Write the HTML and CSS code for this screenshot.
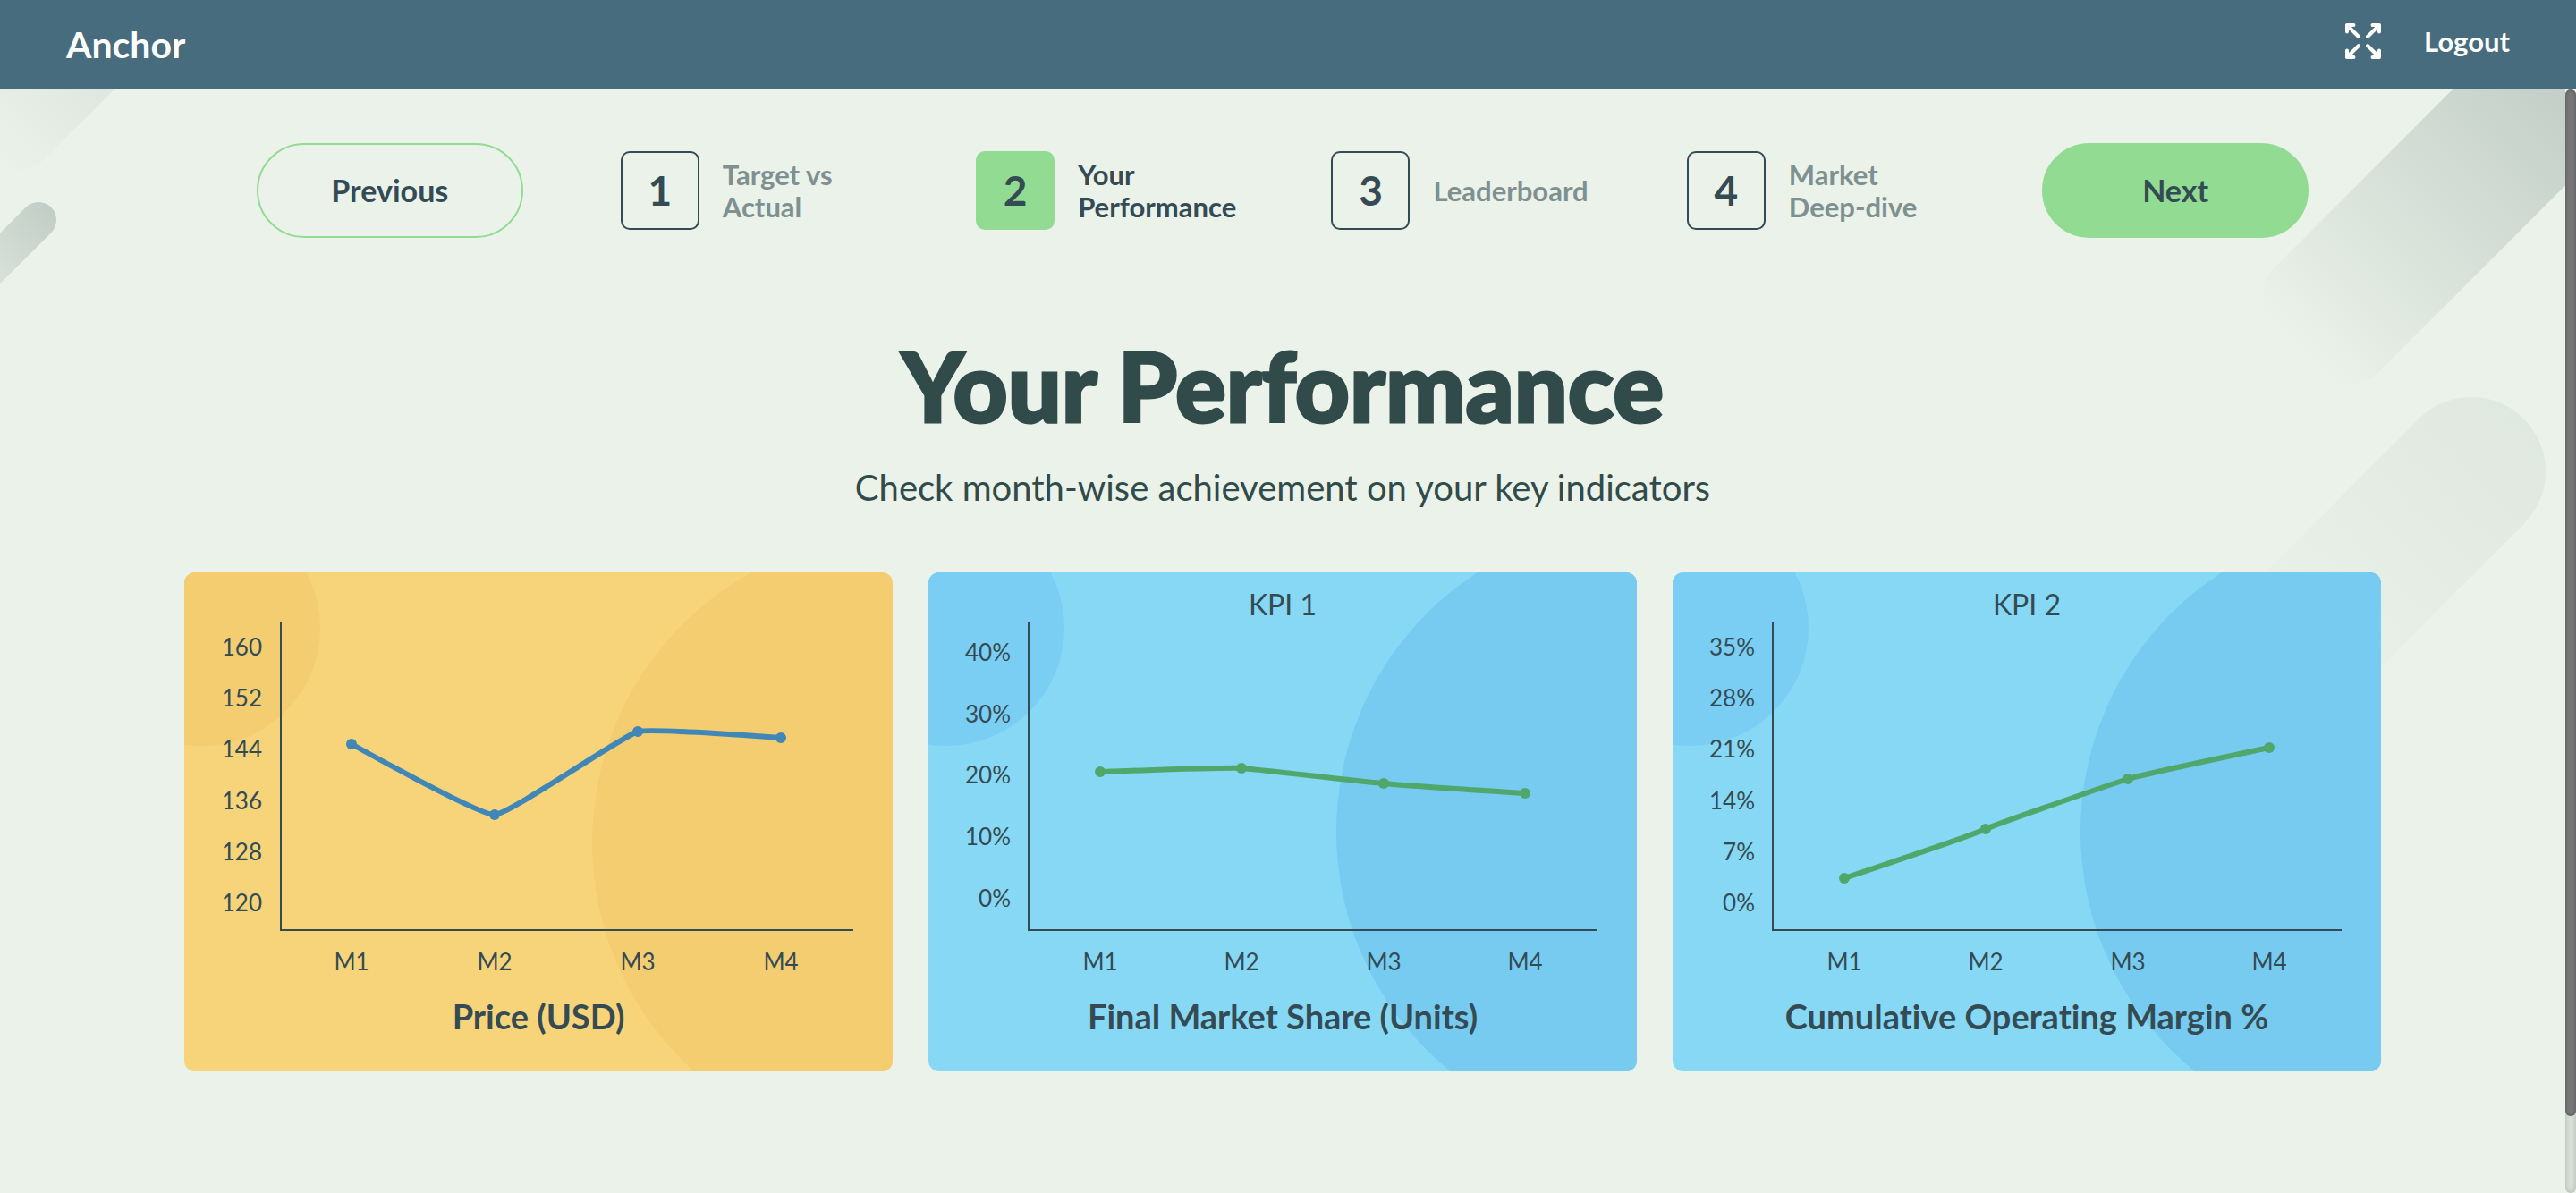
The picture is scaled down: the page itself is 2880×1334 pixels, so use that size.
FILE: index.html
```html
<!DOCTYPE html>
<html lang="en">
<head>
<meta charset="utf-8">
<meta name="viewport" content="width=device-width, initial-scale=1">
<title>Anchor – Your Performance</title>
<link rel="stylesheet" href="styles.css">
</head>
<body>
<header class="topbar">
  <a class="brand" href="#">Anchor</a>
  <div class="topbar-actions">
    <button class="icon-button" type="button" aria-label="Full screen">
      <svg class="icon" viewBox="0 0 40 40" aria-hidden="true">
        <path d="M2 9.500V2h7.500M2 2l13 13M30.500 2H38v7.500M38 2L25 15M2 30.500V38h7.500M2 38l13-13M30.500 38H38v-7.500M38 38L25 25"/>
      </svg>
    </button>
    <a class="logout" href="#">Logout</a>
  </div>
</header>

<main class="page">
  <svg class="decor decor-left" viewBox="0 0 160 300" aria-hidden="true">
    <defs>
      <linearGradient id="fade-a" gradientUnits="userSpaceOnUse" x1="0" y1="0" x2="170" y2="0">
        <stop offset="0" stop-color="#304a4a" stop-opacity="0"/>
        <stop offset="1" stop-color="#304a4a" stop-opacity=".07"/>
      </linearGradient>
      <linearGradient id="fade-b" gradientUnits="userSpaceOnUse" x1="-160" y1="0" x2="20" y2="0">
        <stop offset="0" stop-color="#304a4a" stop-opacity="0"/>
        <stop offset="1" stop-color="#304a4a" stop-opacity=".22"/>
      </linearGradient>
    </defs>
    <g transform="translate(-38 48) rotate(-45)"><rect x="0" y="-82" width="400" height="165" rx="40" fill="url(#fade-a)"/></g>
    <g transform="translate(43 146) rotate(-45)"><rect x="-160" y="-20" width="180" height="40" rx="20" fill="url(#fade-b)"/></g>
  </svg>
  <svg class="decor decor-right" viewBox="0 0 368 800" aria-hidden="true">
    <defs>
      <linearGradient id="fade-c" gradientUnits="userSpaceOnUse" x1="0" y1="0" x2="410" y2="0">
        <stop offset="0" stop-color="#304a4a" stop-opacity="0"/>
        <stop offset="1" stop-color="#304a4a" stop-opacity=".21"/>
      </linearGradient>
      <linearGradient id="fade-d" gradientUnits="userSpaceOnUse" x1="-340" y1="0" x2="82" y2="0">
        <stop offset="0" stop-color="#304a4a" stop-opacity="0"/>
        <stop offset="1" stop-color="#304a4a" stop-opacity=".055"/>
      </linearGradient>
    </defs>
    <g transform="translate(71 287) rotate(-45)"><rect x="0" y="-82" width="500" height="165" rx="40" fill="url(#fade-c)"/></g>
    <g transform="translate(263 427) rotate(-45)"><rect x="-400" y="-83" width="483" height="166" rx="83" fill="url(#fade-d)"/></g>
  </svg>

  <nav class="stepper" aria-label="Report steps">
    <button class="pill pill-outline" type="button">Previous</button>
    <ol class="steps">
      <li><a class="step" href="#"><span class="step-number">1</span><span class="step-label">Target vs<br>Actual</span></a></li>
      <li><a class="step is-current" href="#" aria-current="step"><span class="step-number">2</span><span class="step-label">Your<br>Performance</span></a></li>
      <li><a class="step" href="#"><span class="step-number">3</span><span class="step-label">Leaderboard</span></a></li>
      <li><a class="step" href="#"><span class="step-number">4</span><span class="step-label">Market<br>Deep-dive</span></a></li>
    </ol>
    <button class="pill pill-solid" type="button">Next</button>
  </nav>

  <div class="intro">
    <h1 class="title">Your Performance</h1>
    <p class="subtitle">Check month-wise achievement on your key indicators</p>
  </div>

  <section class="cards" aria-label="Charts">
    <article class="card card-amber">
      <div class="card-label"></div>
      <svg class="chart" viewBox="0 56 792 418" role="img" aria-label="Price by month">
        <path class="axis" d="M108 56V400H748"/>
        <g class="ticks-y">
          <text x="87" y="93">160</text><text x="87" y="150">152</text><text x="87" y="207">144</text>
          <text x="87" y="265">136</text><text x="87" y="322">128</text><text x="87" y="379">120</text>
        </g>
        <g class="ticks-x">
          <text x="187" y="445">M1</text><text x="347" y="445">M2</text><text x="507" y="445">M3</text><text x="667" y="445">M4</text>
        </g>
        <g class="series series-blue">
          <path d="M187 192C187 192 330 272 347 271C364 270 490 183 507 178C523 174 667 185 667 185"/>
          <circle cx="187" cy="192" r="6"/><circle cx="347" cy="271" r="6"/><circle cx="507" cy="178" r="6"/><circle cx="667" cy="185" r="6"/>
        </g>
      </svg>
      <h2 class="card-title">Price (USD)</h2>
    </article>

    <article class="card card-sky">
      <div class="card-label">KPI 1</div>
      <svg class="chart" viewBox="0 56 792 418" role="img" aria-label="Final market share by month">
        <path class="axis" d="M112 56V400H748"/>
        <g class="ticks-y">
          <text x="92" y="99">40%</text><text x="92" y="168">30%</text><text x="92" y="236">20%</text>
          <text x="92" y="305">10%</text><text x="92" y="374">0%</text>
        </g>
        <g class="ticks-x">
          <text x="192" y="445">M1</text><text x="350" y="445">M2</text><text x="509" y="445">M3</text><text x="667" y="445">M4</text>
        </g>
        <g class="series series-green">
          <path d="M192 223C192 223 335 218 350 219C366 220 493 235 509 236C525 238 667 247 667 247"/>
          <circle cx="192" cy="223" r="6"/><circle cx="350" cy="219" r="6"/><circle cx="509" cy="236" r="6"/><circle cx="667" cy="247" r="6"/>
        </g>
      </svg>
      <h2 class="card-title">Final Market Share (Units)</h2>
    </article>

    <article class="card card-sky">
      <div class="card-label">KPI 2</div>
      <svg class="chart" viewBox="0 56 792 418" role="img" aria-label="Cumulative operating margin by month">
        <path class="axis" d="M112 56V400H748"/>
        <g class="ticks-y">
          <text x="92" y="93">35%</text><text x="92" y="150">28%</text><text x="92" y="207">21%</text>
          <text x="92" y="265">14%</text><text x="92" y="322">7%</text><text x="92" y="379">0%</text>
        </g>
        <g class="ticks-x">
          <text x="192" y="445">M1</text><text x="350" y="445">M2</text><text x="509" y="445">M3</text><text x="667" y="445">M4</text>
        </g>
        <g class="series series-green">
          <path d="M192 342C192 342 335 294 350 287C366 280 493 236 509 231C525 226 667 196 667 196"/>
          <circle cx="192" cy="342" r="6"/><circle cx="350" cy="287" r="6"/><circle cx="509" cy="231" r="6"/><circle cx="667" cy="196" r="6"/>
        </g>
      </svg>
      <h2 class="card-title">Cumulative Operating Margin %</h2>
    </article>
  </section>

  <div class="scroll-track" aria-hidden="true"><div class="scroll-thumb"></div></div>
</main>
</body>
</html>
```
FILE: styles.css
```css
* {
  box-sizing: border-box;
}

body {
  margin: 0;
  min-height: 100vh;
  display: flex;
  flex-direction: column;
  background: #eaf2e9;
  color: #344b54;
  font-family: Lato, "Liberation Sans", sans-serif;
  font-variant-ligatures: none;
}

a {
  color: inherit;
  text-decoration: none;
}

button {
  font: inherit;
  color: inherit;
  cursor: pointer;
}

/* Top bar */
.topbar {
  display: flex;
  align-items: center;
  justify-content: space-between;
  height: 100px;
  padding: 0 74px;
  background: #466c7d;
  color: #fff;
}

.brand {
  font-size: 41px;
  line-height: 48px;
  font-weight: 700;
}

.topbar-actions {
  display: flex;
  align-items: center;
  gap: 48px;
  padding-bottom: 8px;
}

.icon-button {
  display: flex;
  padding: 0;
  border: 0;
  background: none;
}

.icon {
  width: 40px;
  height: 40px;
  fill: none;
  stroke: #fff;
  stroke-width: 4;
  stroke-linecap: round;
  stroke-linejoin: round;
}

.logout {
  font-size: 31px;
  line-height: 36px;
  font-weight: 700;
}

/* Page body */
.page {
  position: relative;
  flex: 1;
  padding: 60px 12px 0 0;
}

.decor {
  position: absolute;
  top: 0;
  overflow: hidden;
}

.decor-left {
  left: 0;
  width: 160px;
}

.decor-right {
  right: 12px;
  width: 368px;
}

/* Stepper */
.stepper {
  position: relative;
  display: flex;
  align-items: center;
  width: 80%;
  margin: 0 auto;
}

.pill {
  flex: none;
  width: 298px;
  height: 106px;
  border: 2px solid #92db92;
  border-radius: 53px;
  font-size: 34px;
  line-height: 40px;
  font-weight: 700;
}

.pill-outline {
  background: transparent;
}

.pill-solid {
  background: #92db92;
}

.steps {
  flex: 1;
  display: grid;
  grid-template-columns: repeat(4, 1fr);
  margin: 0 0 0 109px;
  padding: 0;
  list-style: none;
}

.step {
  display: flex;
  align-items: center;
  gap: 26px;
}

.step-number {
  flex: none;
  display: grid;
  place-items: center;
  width: 88px;
  height: 88px;
  border: 2px solid #344b54;
  border-radius: 10px;
  font-size: 46px;
  line-height: 56px;
  font-weight: 700;
}

.step-label {
  color: #7f9090;
  font-size: 31px;
  line-height: 36px;
  font-weight: 700;
}

.is-current .step-number {
  border-color: #92db92;
  background: #92db92;
}

.is-current .step-label {
  color: #344b54;
}

/* Heading */
.intro {
  position: relative;
  margin: 103px 0 71px;
  color: #304b4a;
  text-align: center;
}

.title {
  margin: 0 0 28px;
  font-family: "Lato Black", Lato, "Liberation Sans", sans-serif;
  font-size: 106px;
  line-height: 124px;
  font-weight: 900;
  -webkit-text-stroke: 3px #304b4a;
}

.subtitle {
  margin: 0;
  font-size: 40px;
  line-height: 48px;
}

/* Chart cards */
.cards {
  position: relative;
  display: grid;
  grid-template-columns: repeat(3, 1fr);
  gap: 40px;
  padding: 0 206px;
}

.card {
  position: relative;
  z-index: 0;
  overflow: hidden;
  padding: 16px 0 40px;
  border-radius: 12px;
  text-align: center;
}

.card::before,
.card::after {
  content: "";
  position: absolute;
  z-index: -1;
  border-radius: 50%;
}

.card::before {
  left: -112px;
  top: -70px;
  width: 264px;
  height: 264px;
}

.card::after {
  left: 456px;
  top: -55px;
  width: 690px;
  height: 690px;
}

.card-amber {
  background: #f7d47a;
}

.card-amber::before,
.card-amber::after {
  background: #f4cd70;
}

.card-amber::after {
  top: -43px;
}

.card-sky {
  background: #87d8f5;
}

.card-sky::before {
  background: #7acef4;
}

.card-sky::after {
  background: #77cbf1;
}

.card-label {
  min-height: 40px;
  font-size: 32px;
  line-height: 40px;
}

.chart {
  display: block;
  width: 100%;
}

.chart text {
  font-size: 26px;
  fill: #344b54;
}

.ticks-y {
  text-anchor: end;
}

.ticks-x {
  text-anchor: middle;
}

.axis {
  fill: none;
  stroke: #344b54;
  stroke-width: 2;
}

.series path {
  fill: none;
  stroke-width: 6;
}

.series-blue {
  stroke: #4087b8;
  fill: #4087b8;
}

.series-green {
  stroke: #50a76b;
  fill: #50a76b;
}

.series circle {
  stroke: none;
}

.card-title {
  margin: 0;
  font-size: 38px;
  line-height: 44px;
  font-weight: 700;
}

/* Scroll indicator */
.scroll-track {
  position: absolute;
  top: 0;
  right: 0;
  bottom: 0;
  width: 12px;
  border-radius: 6px;
  background: #d9e1d9;
  box-shadow: inset 0 0 6px rgba(0, 0, 0, .2);
}

.scroll-thumb {
  height: 93%;
  border-radius: 6px;
  background: #777;
  box-shadow: inset 0 0 4px rgba(0, 0, 0, .3);
}
```
